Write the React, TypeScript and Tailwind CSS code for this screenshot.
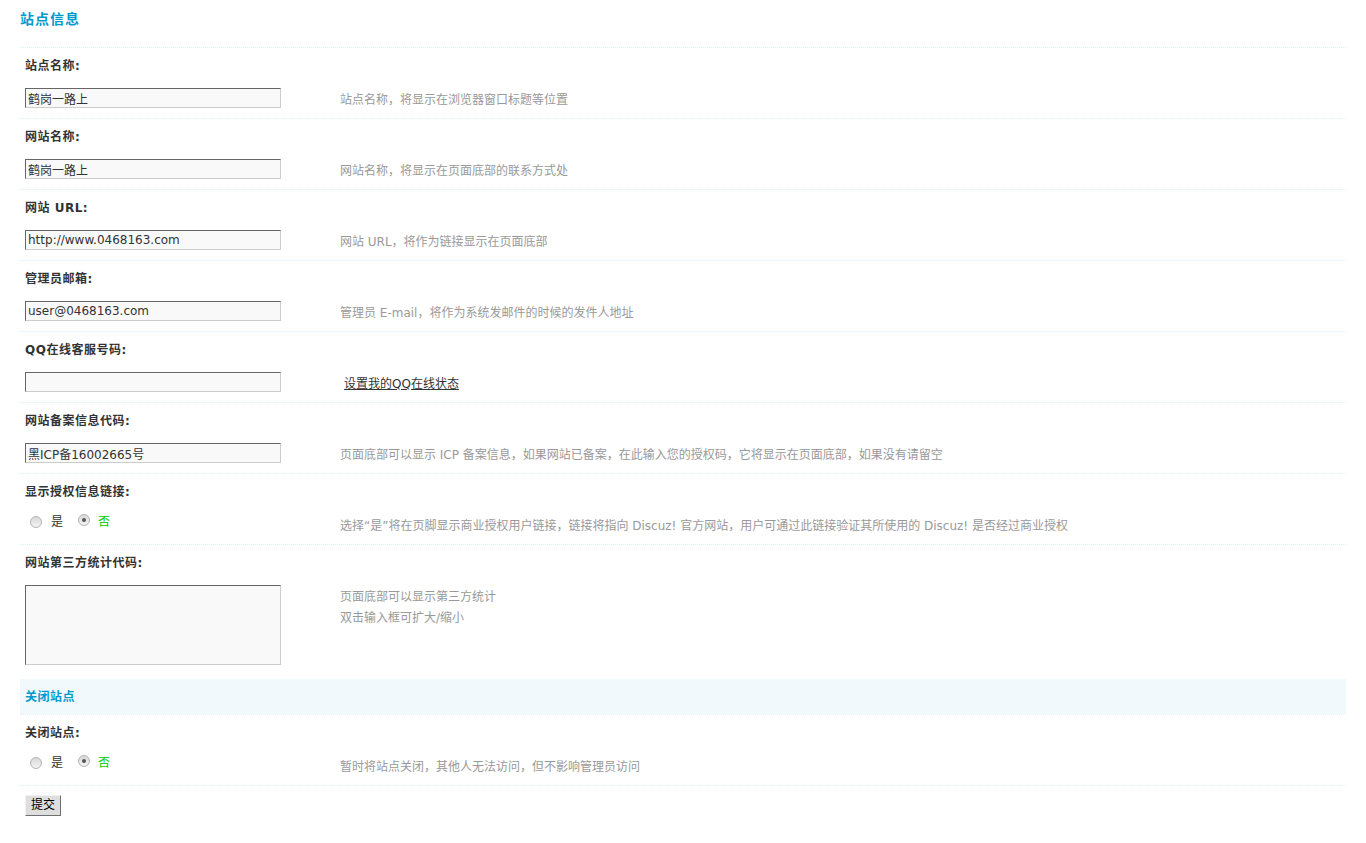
import React from "react";

type Field = {
  label: string;
  value?: string;
  tip?: React.ReactNode;
  kind: "text" | "radio" | "textarea";
  link?: string;
};

const fields: Field[] = [
  { label: "站点名称:", value: "鹤岗一路上", kind: "text", tip: "站点名称，将显示在浏览器窗口标题等位置" },
  { label: "网站名称:", value: "鹤岗一路上", kind: "text", tip: "网站名称，将显示在页面底部的联系方式处" },
  { label: "网站 URL:", value: "http://www.0468163.com", kind: "text", tip: "网站 URL，将作为链接显示在页面底部" },
  { label: "管理员邮箱:", value: "user@0468163.com", kind: "text", tip: "管理员 E-mail，将作为系统发邮件的时候的发件人地址" },
  { label: "QQ在线客服号码:", value: "", kind: "text", link: "设置我的QQ在线状态" },
  {
    label: "网站备案信息代码:",
    value: "黑ICP备16002665号",
    kind: "text",
    tip: "页面底部可以显示 ICP 备案信息，如果网站已备案，在此输入您的授权码，它将显示在页面底部，如果没有请留空",
  },
  {
    label: "显示授权信息链接:",
    kind: "radio",
    tip: "选择“是”将在页脚显示商业授权用户链接，链接将指向 Discuz! 官方网站，用户可通过此链接验证其所使用的 Discuz! 是否经过商业授权",
  },
  {
    label: "网站第三方统计代码:",
    kind: "textarea",
    tip: (
      <>
        页面底部可以显示第三方统计
        <br />
        双击输入框可扩大/缩小
      </>
    ),
  },
];

function Radio({ checked }: { checked?: boolean }) {
  return (
    <span className="relative inline-block w-[12px] h-[12px] rounded-full border border-[#b4b4b4] bg-gradient-to-b from-[#d8d8d8] to-[#f4f4f4]">
      {checked && (
        <span className="absolute left-[3px] top-[3px] w-[4px] h-[4px] rounded-full bg-[#555]" />
      )}
    </span>
  );
}

function RadioGroup() {
  return (
    <div className="flex items-center h-[14px] pl-[5px] text-[#333]">
      <Radio />
      <span className="ml-[9px]">是</span>
      <span className="ml-[15px]">
        <Radio checked />
      </span>
      <span className="ml-[8px] text-[#00cc00]">否</span>
    </div>
  );
}

function Row({ f }: { f: Field }) {
  return (
    <div className="border-t border-dotted border-[#deeffb]">
      <div className="h-[36px] flex items-center pl-[5px] font-bold text-[#333] tracking-[0.5px]">
        {f.label}
      </div>
      <div className={f.kind === "textarea" ? "flex pt-[4px] pb-[14px]" : "flex pt-[4px] pb-[10px] h-[34px]"}>
        <div className="w-[320px] shrink-0 pl-[5px]">
          {f.kind === "text" && (
            <input
              defaultValue={f.value}
              className="block w-[256px] h-[20px] px-[2px] bg-[#f9f9f9] border border-t-[#666] border-l-[#666] border-b-[#ccc] border-r-[#ccc] text-[#333] outline-none text-[12px]"
              style={{ fontFamily: '"DejaVu Sans", "Noto Sans CJK SC", sans-serif' }}
            />
          )}
          {f.kind === "textarea" && (
            <textarea className="block w-[256px] h-[80px] bg-[#f9f9f9] border border-t-[#666] border-l-[#666] border-b-[#ccc] border-r-[#ccc] resize-none outline-none" />
          )}
          {f.kind === "radio" && (
            <div className="pt-[1px]">
              <RadioGroup />
            </div>
          )}
        </div>
        <div className="pt-[2px] leading-[21px] text-[#999]">
          {f.link ? (
            <a href="#" className="ml-[4px] text-[#333] underline">
              {f.link}
            </a>
          ) : (
            f.tip
          )}
        </div>
      </div>
    </div>
  );
}

export default function App() {
  return (
    <div
      className="min-h-[843px] bg-white px-[20px] text-[12px] text-[#333]"
      style={{ fontFamily: '"DejaVu Sans", "Noto Sans CJK SC", sans-serif' }}
    >
      <div className="h-[47px] pt-[9px]">
        <h3 className="text-[14px] leading-[20px] font-bold text-[#0099cc] tracking-[1px]">站点信息</h3>
      </div>

      {fields.map((f) => (
        <Row key={f.label} f={f} />
      ))}

      <div className="h-[35px] bg-[#f2f9fd] flex items-center pl-[5px] font-bold text-[#0099cc] tracking-[0.5px]">
        关闭站点
      </div>

      <div className="border-t border-dotted border-[#deeffb]">
        <div className="h-[36px] flex items-center pl-[5px] font-bold text-[#333] tracking-[0.5px]">关闭站点:</div>
        <div className="flex pt-[4px] pb-[10px] h-[34px]">
          <div className="w-[320px] shrink-0 pl-[5px] pt-[1px]">
            <RadioGroup />
          </div>
          <div className="pt-[2px] leading-[21px] text-[#999]">暂时将站点关闭，其他人无法访问，但不影响管理员访问</div>
        </div>
      </div>

      <div className="border-t border-dotted border-[#deeffb] pt-[9px] pl-[5px]">
        <button className="h-[21px] px-[5px] bg-[#dedede] text-black border border-t-[#f2f2f2] border-l-[#f2f2f2] border-b-[#707070] border-r-[#707070] leading-[15px]">
          提交
        </button>
      </div>
    </div>
  );
}
